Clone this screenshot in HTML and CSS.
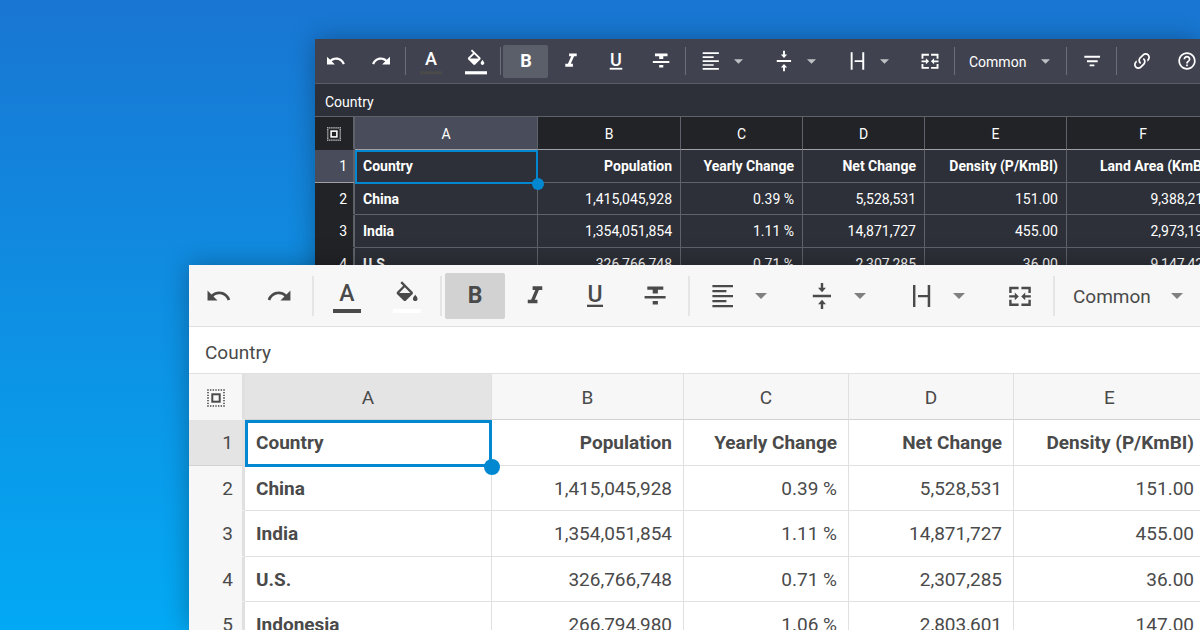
FILE: index.html
```html
<!DOCTYPE html>
<html lang="en">
<head>
<meta charset="utf-8">
<meta name="viewport" content="width=device-width, initial-scale=1">
<title>Spreadsheet themes</title>
<link rel="stylesheet" href="styles.css">
</head>
<body>
<svg class="sprite" aria-hidden="true">
  <symbol id="undo" viewBox="0 0 28 28"><path transform="translate(.3 .7) scale(1.11)" d="M12.5 8c-2.65 0-5.05.99-6.9 2.6L2 7v9h9l-3.62-3.62c1.39-1.16 3.16-1.88 5.12-1.88 3.54 0 6.55 2.31 7.6 5.5l2.37-.78C21.08 11.03 17.15 8 12.5 8z"/></symbol>
  <symbol id="redo" viewBox="0 0 28 28"><path transform="translate(1 .7) scale(1.11)" d="M18.4 10.6C16.55 8.99 14.15 8 11.5 8c-4.65 0-8.58 3.03-9.96 7.22L3.9 16c1.05-3.19 4.05-5.5 7.6-5.5 1.95 0 3.73.72 5.12 1.88L13 16h9V7l-3.6 3.6z"/></symbol>
  <symbol id="fill" viewBox="0 0 28 28" overflow="visible"><path transform="translate(.2 -.7) scale(1.16)" d="M16.56 8.94L7.62 0 6.21 1.41l2.38 2.38-5.15 5.15c-.59.59-.59 1.54 0 2.12l5.5 5.5c.29.29.68.44 1.06.44s.77-.15 1.06-.44l5.5-5.5c.59-.58.59-1.53 0-2.12zM5.21 10L10 5.21 14.79 10H5.21zM19 11.5s-2 2.17-2 3.5c0 1.1.9 2 2 2s2-.9 2-2c0-1.33-2-3.5-2-3.5z"/><rect y="27" width="28" height="4" fill="#fff"/></symbol>
  <symbol id="italic" viewBox="0 0 28 28"><path transform="translate(-.5 -.5) scale(1.21)" d="M10 4v3h2.21l-3.42 8H6v3h8v-3h-2.21l3.42-8H18V4z"/></symbol>
  <symbol id="strike" viewBox="0 0 28 28"><path d="M6.3 4.6h16v3.2h-5.4v3.7h-5.2V7.8H6.3zM3.6 13.9h21v2.5h-21zM11.7 19h5.2v3.4h-5.2z"/></symbol>
  <symbol id="align" viewBox="0 0 28 28"><path d="M3.4 3H24v2.2H3.4zM3.4 8h14v2.2h-14zM3.4 13H24v2.2H3.4zM3.4 18h14v2.2h-14zM3.4 23H24v2.2H3.4z"/></symbol>
  <symbol id="valign" viewBox="0 0 28 28"><path d="M4.8 12.8H23v2.4H4.8zM12.8 1h2.4v4.8H18l-4 4.4-4-4.4h2.8zM12.8 27h2.4v-4.8H18l-4-4.4-4 4.4h2.8z"/></symbol>
  <symbol id="wrap" viewBox="0 0 28 28"><path d="M6 3h2.4v22H6zM20.7 3h2.5v22h-2.5zM11 13h9.7v2.3H11z"/></symbol>
  <symbol id="merge" viewBox="0 0 28 28"><path d="M3.2 4.8h9.4v2.4h-7V11H3.2zM15.4 4.8h9.4V11h-2.4V7.2h-7zM3.2 17.8h2.4v3.8h7V24H3.2zM22.4 17.8h2.4V24h-9.4v-2.4h7zM3.2 13.3h5.6v-2.7l4 3.8-4 3.8v-2.7H3.2zM24.8 13.3h-5.6v-2.7l-4 3.8 4 3.8v-2.7h5.6z"/></symbol>
  <symbol id="filter" viewBox="0 0 28 28"><path d="M4.2 7.4h20v2.4h-20zM7.6 13.1h13.6v2.4H7.6zM11 18.4h6v2.4h-6z"/></symbol>
  <symbol id="link" viewBox="0 0 28 28"><path transform="translate(.8 .8) scale(1.1)" d="M10.59 13.41C11 13.8 11 14.44 10.59 14.83 10.2 15.22 9.56 15.22 9.17 14.83 7.22 12.88 7.22 9.71 9.17 7.76L12.71 4.22C14.66 2.27 17.83 2.27 19.78 4.22 21.73 6.17 21.73 9.34 19.78 11.29L18.29 12.78C18.3 11.96 18.17 11.14 17.89 10.36L18.36 9.88C19.54 8.71 19.54 6.81 18.36 5.64 17.19 4.46 15.29 4.46 14.12 5.64L10.59 9.17C9.41 10.34 9.41 12.24 10.59 13.41M13.41 9.17C13.8 8.78 14.44 8.78 14.83 9.17 16.78 11.12 16.78 14.29 14.83 16.24L11.29 19.78C9.34 21.73 6.17 21.73 4.22 19.78 2.27 17.83 2.27 14.66 4.22 12.71L5.71 11.22C5.7 12.04 5.83 12.86 6.11 13.65L5.64 14.12C4.46 15.29 4.46 17.19 5.64 18.36 6.81 19.54 8.71 19.54 9.88 18.36L13.41 14.83C14.59 13.66 14.59 11.76 13.41 10.59 13 10.2 13 9.56 13.41 9.17Z"/></symbol>
  <symbol id="help" viewBox="0 0 28 28"><path transform="translate(.8 .8) scale(1.1)" d="M11 18h2v-2h-2v2zm1-16C6.48 2 2 6.48 2 12s4.48 10 10 10 10-4.48 10-10S17.52 2 12 2zm0 18c-4.41 0-8-3.59-8-8s3.59-8 8-8 8 3.59 8 8-3.59 8-8 8zm0-14c-2.21 0-4 1.79-4 4h2c0-1.1.9-2 2-2s2 .9 2 2c0 2-3 1.75-3 5h2c0-2.25 3-2.5 3-5 0-2.21-1.79-4-4-4z"/></symbol>
  <symbol id="caret" viewBox="0 0 12 6"><path d="M0 0h12L6 6z"/></symbol>
  <symbol id="all" viewBox="0 0 18 18"><g fill="none" stroke="currentColor"><rect x="1" y="1" width="16" height="16" stroke-width="1.6" stroke-dasharray="1.4 1.267" stroke-dashoffset=".7"/><rect x="5.3" y="5.3" width="7.4" height="7.4" stroke-width="2"/></g></symbol>
</svg>

<main class="stage">
  <section class="sheet dark" aria-label="Dark theme">
    <div class="toolbar">
      <button class="tool" aria-label="Undo"><svg class="icon"><use href="#undo"/></svg></button>
      <button class="tool" aria-label="Redo"><svg class="icon"><use href="#redo"/></svg></button>
      <span class="sep"></span>
      <button class="tool" aria-label="Text color"><svg class="icon" viewBox="0 0 28 28"><text class="letter medium" x="14" y="19">A</text><rect class="bar-text" y="27" width="28" height="4"/></svg></button>
      <button class="tool" aria-label="Fill color"><svg class="icon"><use href="#fill"/></svg></button>
      <span class="sep"></span>
      <button class="tool active" aria-label="Bold" aria-pressed="true"><svg class="icon" viewBox="0 0 28 28"><text class="letter" x="14" y="21">B</text></svg></button>
      <button class="tool" aria-label="Italic"><svg class="icon"><use href="#italic"/></svg></button>
      <button class="tool" aria-label="Underline"><svg class="icon" viewBox="0 0 28 28"><text class="letter medium" x="14" y="20">U</text><rect x="6" y="22.7" width="16" height="2.3"/></svg></button>
      <button class="tool" aria-label="Strikethrough"><svg class="icon"><use href="#strike"/></svg></button>
      <span class="sep"></span>
      <button class="tool menu" aria-label="Horizontal align"><svg class="icon"><use href="#align"/></svg><svg class="caret"><use href="#caret"/></svg></button>
      <button class="tool menu" aria-label="Vertical align"><svg class="icon"><use href="#valign"/></svg><svg class="caret"><use href="#caret"/></svg></button>
      <button class="tool menu" aria-label="Text wrap"><svg class="icon"><use href="#wrap"/></svg><svg class="caret"><use href="#caret"/></svg></button>
      <button class="tool" aria-label="Merge cells"><svg class="icon"><use href="#merge"/></svg></button>
      <span class="sep"></span>
      <label class="format"><select aria-label="Number format"><option>Common</option></select><svg class="caret"><use href="#caret"/></svg></label>
      <span class="sep"></span>
      <button class="tool" aria-label="Filter"><svg class="icon"><use href="#filter"/></svg></button>
      <span class="sep"></span>
      <button class="tool" aria-label="Insert link"><svg class="icon"><use href="#link"/></svg></button>
      <button class="tool" aria-label="Help"><svg class="icon"><use href="#help"/></svg></button>
    </div>
    <input class="formula" aria-label="Cell value" value="Country">
    <table class="grid">
      <colgroup><col class="c-num"><col class="c-a"><col class="c-b"><col class="c-c"><col class="c-d"><col class="c-e"><col class="c-f"></colgroup>
      <thead>
        <tr><th class="corner"><svg class="all"><use href="#all"/></svg></th><th class="current">A</th><th>B</th><th>C</th><th>D</th><th>E</th><th>F</th></tr>
      </thead>
      <tbody>
        <tr class="titles"><th class="current">1</th><td class="selected">Country</td><td>Population</td><td>Yearly Change</td><td>Net Change</td><td>Density (P/KmBI)</td><td>Land Area (KmBI)</td></tr>
        <tr><th>2</th><td>China</td><td>1,415,045,928</td><td>0.39 %</td><td>5,528,531</td><td>151.00</td><td>9,388,211</td></tr>
        <tr><th>3</th><td>India</td><td>1,354,051,854</td><td>1.11 %</td><td>14,871,727</td><td>455.00</td><td>2,973,190</td></tr>
        <tr><th>4</th><td>U.S.</td><td>326,766,748</td><td>0.71 %</td><td>2,307,285</td><td>36.00</td><td>9,147,420</td></tr>
      </tbody>
    </table>
  </section>

  <section class="sheet light" aria-label="Light theme">
    <div class="toolbar">
      <button class="tool" aria-label="Undo"><svg class="icon"><use href="#undo"/></svg></button>
      <button class="tool" aria-label="Redo"><svg class="icon"><use href="#redo"/></svg></button>
      <span class="sep"></span>
      <button class="tool" aria-label="Text color"><svg class="icon" viewBox="0 0 28 28"><text class="letter medium" x="14" y="19">A</text><rect class="bar-text" y="27" width="28" height="4"/></svg></button>
      <button class="tool" aria-label="Fill color"><svg class="icon"><use href="#fill"/></svg></button>
      <span class="sep"></span>
      <button class="tool active" aria-label="Bold" aria-pressed="true"><svg class="icon" viewBox="0 0 28 28"><text class="letter" x="14" y="21">B</text></svg></button>
      <button class="tool" aria-label="Italic"><svg class="icon"><use href="#italic"/></svg></button>
      <button class="tool" aria-label="Underline"><svg class="icon" viewBox="0 0 28 28"><text class="letter medium" x="14" y="20">U</text><rect x="6" y="22.7" width="16" height="2.3"/></svg></button>
      <button class="tool" aria-label="Strikethrough"><svg class="icon"><use href="#strike"/></svg></button>
      <span class="sep"></span>
      <button class="tool menu" aria-label="Horizontal align"><svg class="icon"><use href="#align"/></svg><svg class="caret"><use href="#caret"/></svg></button>
      <button class="tool menu" aria-label="Vertical align"><svg class="icon"><use href="#valign"/></svg><svg class="caret"><use href="#caret"/></svg></button>
      <button class="tool menu" aria-label="Text wrap"><svg class="icon"><use href="#wrap"/></svg><svg class="caret"><use href="#caret"/></svg></button>
      <button class="tool" aria-label="Merge cells"><svg class="icon"><use href="#merge"/></svg></button>
      <span class="sep"></span>
      <label class="format"><select aria-label="Number format"><option>Common</option></select><svg class="caret"><use href="#caret"/></svg></label>
    </div>
    <input class="formula" aria-label="Cell value" value="Country">
    <table class="grid">
      <colgroup><col class="c-num"><col class="c-a"><col class="c-b"><col class="c-c"><col class="c-d"><col class="c-e"></colgroup>
      <thead>
        <tr><th class="corner"><svg class="all"><use href="#all"/></svg></th><th class="current">A</th><th>B</th><th>C</th><th>D</th><th>E</th></tr>
      </thead>
      <tbody>
        <tr class="titles"><th class="current">1</th><td class="selected">Country</td><td>Population</td><td>Yearly Change</td><td>Net Change</td><td>Density (P/KmBI)</td></tr>
        <tr><th>2</th><td>China</td><td>1,415,045,928</td><td>0.39 %</td><td>5,528,531</td><td>151.00</td></tr>
        <tr><th>3</th><td>India</td><td>1,354,051,854</td><td>1.11 %</td><td>14,871,727</td><td>455.00</td></tr>
        <tr><th>4</th><td>U.S.</td><td>326,766,748</td><td>0.71 %</td><td>2,307,285</td><td>36.00</td></tr>
        <tr><th>5</th><td>Indonesia</td><td>266,794,980</td><td>1.06 %</td><td>2,803,601</td><td>147.00</td></tr>
      </tbody>
    </table>
  </section>
</main>
</body>
</html>
```
FILE: styles.css
```css
* { box-sizing: border-box; }

body {
  margin: 0;
  font-family: Roboto, "Liberation Sans", sans-serif;
}

.sprite {
  position: absolute;
  width: 0;
  height: 0;
}

.stage {
  position: relative;
  height: 100vh;
  overflow: hidden;
  background: linear-gradient(#1976d2, #03a9f4);
}

/* Overlapping windows */
.sheet {
  position: absolute;
  right: 0;
  bottom: 0;
  overflow: hidden;
  color: var(--text);
  background: var(--cell);
  font-size: var(--font);
  box-shadow: 0 0 24px rgba(0, 0, 0, 0.3);
}

.dark {
  --text: #fff;
  --cell: #2d3038;
  --bar: #40434f;
  --head: #222327;
  --current: #494d5b;
  --line: #5f626a;
  --bar-line: #5a5d68;
  --head-line: #a0a1a6;
  --sep: #6c6f7b;
  --active: #5b5f6a;
  --caret: #c0c1c5;
  --swatch: #4a4a4a;
  --font: 14px;
  --bar-h: 45px;
  --bar-start: -2px;
  --tool-w: 45px;
  --tool-h: 33px;
  --menu-w: 73px;
  --icon: 22px;
  --caret-w: 9px;
  --caret-h: 5px;
  --menu-gap: 12px;
  --sep-w: 5px;
  --sep-line: 1px;
  --sep-h: 28px;
  --format-w: 107px;
  --format-pad: 12px;
  --format-end: 14px;
  --formula-h: 33px;
  --formula-pad: 10px;
  --formula-top: 3px;
  --head-h: 33px;
  --row-odd: 33px;
  --row-even: 32px;
  --pad: 8px;
  --num-pad: 6px;
  --all: 14px;
  --num-border: 2px;
  --select: 2px;
  --dot: 12px;
  left: 315px;
  top: 39px;
}

.light {
  --text: #4a4a4a;
  --cell: #fff;
  --bar: #f7f7f7;
  --head: #f7f7f7;
  --current: #e4e4e4;
  --line: #e0e0e0;
  --bar-line: #dfdfdf;
  --head-line: #d2d2d2;
  --sep: #e5e5e5;
  --active: #d2d2d2;
  --caret: #808080;
  --swatch: #4a4a4a;
  --font: 19px;
  --bar-h: 62px;
  --bar-start: 0;
  --tool-w: 60px;
  --tool-h: 46px;
  --menu-w: 99px;
  --icon: 28px;
  --caret-w: 12px;
  --caret-h: 6px;
  --menu-gap: 18px;
  --sep-w: 8px;
  --sep-line: 2px;
  --sep-h: 40px;
  --format-w: 140px;
  --format-pad: 15px;
  --format-end: 15px;
  --formula-h: 47px;
  --formula-pad: 16px;
  --formula-top: 4px;
  --head-h: 46px;
  --row-odd: 46px;
  --row-even: 45px;
  --pad: 11px;
  --num-pad: 9px;
  --all: 18px;
  --num-border: 3px;
  --select: 3px;
  --dot: 16px;
  left: 189px;
  top: 265px;
}

/* Toolbar */
.toolbar {
  display: flex;
  align-items: center;
  height: var(--bar-h);
  margin-left: var(--bar-start);
  background: var(--bar);
  border-bottom: 1px solid var(--bar-line);
}

.tool {
  display: flex;
  flex: none;
  align-items: center;
  justify-content: center;
  width: var(--tool-w);
  height: var(--tool-h);
  padding: 0;
  border: 0;
  border-radius: 2px;
  color: inherit;
  background: none;
  font-family: inherit;
}

.tool.active { background: var(--active); }

.tool.menu {
  justify-content: flex-start;
  gap: var(--menu-gap);
  width: var(--menu-w);
  padding-left: calc((var(--tool-w) - var(--icon)) / 2);
}

.icon {
  flex: none;
  width: var(--icon);
  height: var(--icon);
  overflow: visible;
  fill: currentColor;
}

.letter {
  font-size: 23px;
  font-weight: 700;
  text-anchor: middle;
}

.letter.medium { font-weight: 500; }

.bar-text { fill: var(--swatch); }

.caret {
  flex: none;
  width: var(--caret-w);
  height: var(--caret-h);
  fill: var(--caret);
}

.sep {
  display: flex;
  flex: none;
  justify-content: center;
  width: var(--sep-w);
  height: var(--sep-h);
}

.sep::before {
  content: "";
  width: var(--sep-line);
  background: var(--sep);
}

.format {
  display: flex;
  flex: none;
  align-items: center;
  justify-content: space-between;
  width: var(--format-w);
  padding: 0 var(--format-end) 0 var(--format-pad);
}

.format select {
  padding: 2px 0 0;
  border: 0;
  appearance: none;
  color: inherit;
  background: none;
  font: inherit;
}

.formula {
  display: block;
  width: 100%;
  height: var(--formula-h);
  padding: var(--formula-top) var(--formula-pad) 0;
  border: 0;
  border-bottom: 1px solid var(--line);
  outline: 0;
  color: inherit;
  background: var(--cell);
  font: inherit;
}

/* Grid */
.grid {
  width: 0;
  table-layout: fixed;
  border-collapse: separate;
  border-spacing: 0;
}

.dark .c-num { width: 40px; }
.dark .c-a { width: 183px; }
.dark .c-b { width: 143px; }
.dark .c-c, .dark .c-d { width: 122px; }
.dark .c-e { width: 142px; }
.dark .c-f { width: 153px; }

.light .c-num { width: 56px; }
.light .c-a { width: 247px; }
.light .c-b, .light .c-e { width: 192px; }
.light .c-c, .light .c-d { width: 165px; }

.grid th,
.grid td {
  padding: 0 var(--pad);
  border-right: 1px solid var(--line);
  border-bottom: 1px solid var(--line);
  line-height: 1;
  text-align: right;
  white-space: nowrap;
}

.grid th {
  background: var(--head);
  font-weight: 400;
}

.grid thead th {
  height: var(--head-h);
  padding: 2px 0 0;
  border-bottom-color: var(--head-line);
  text-align: center;
}

.grid tbody tr { height: var(--row-even); }
.grid tbody tr:nth-child(odd) { height: var(--row-odd); }

.grid tbody th {
  padding-right: var(--num-pad);
  border-right: var(--num-border) solid var(--line);
  border-bottom-color: var(--head);
}

.grid thead .corner {
  border-right: var(--num-border) solid var(--line);
  border-bottom-color: var(--head);
}

.grid .current { background: var(--current); }
.grid tbody .current { border-bottom-color: var(--head-line); }

.grid td:nth-child(2) {
  text-align: left;
  font-weight: 700;
}

.titles td { font-weight: 700; }

.all {
  display: block;
  width: var(--all);
  height: var(--all);
  margin: 0 auto;
}

.selected { position: relative; }

.selected::before {
  content: "";
  position: absolute;
  inset: 0 -1px -2px 0;
  border: var(--select) solid #0288d1;
}

.selected::after {
  content: "";
  position: absolute;
  right: calc(var(--dot) / -2 - 1px);
  bottom: calc(var(--dot) / -2 - 2px);
  width: var(--dot);
  height: var(--dot);
  border-radius: 50%;
  background: #0288d1;
}
```
